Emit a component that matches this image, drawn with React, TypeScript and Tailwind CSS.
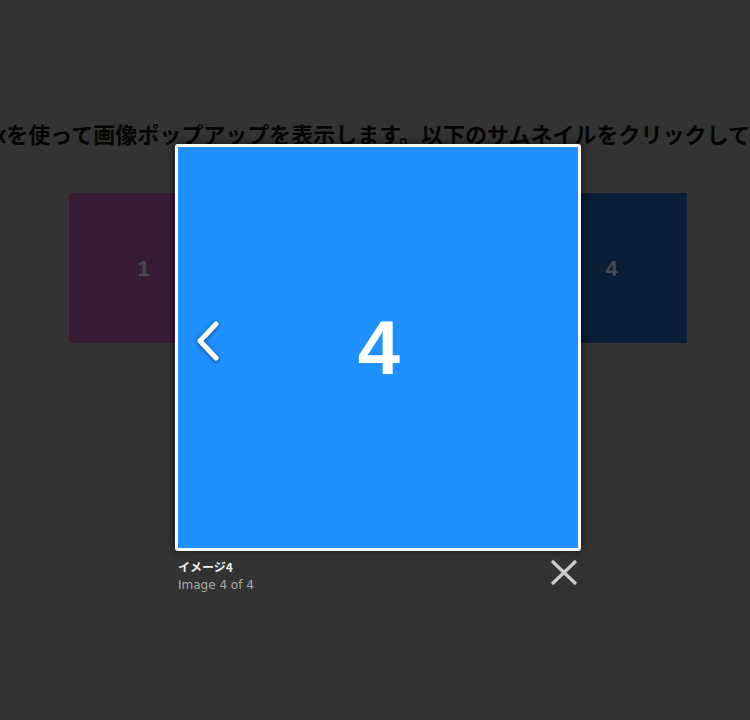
const thumbs = [
  { n: 1, bg: "bg-[#361a36]" },
  { n: 2, bg: "bg-[#1a3a26]" },
  { n: 3, bg: "bg-[#3a2a14]" },
  { n: 4, bg: "bg-[#0a1e38]" },
];

export default function App() {
  return (
    <div className="relative w-[750px] h-[720px] overflow-hidden bg-[#333333] font-['Liberation_Sans',sans-serif]">
      <div className="pt-[118px]">
        <div className="flex justify-center overflow-hidden">
          <h2 className="shrink-0 whitespace-nowrap pl-[20px] text-[22px] leading-[30px] font-bold text-[#050505] font-['Noto_Sans_CJK_JP','Noto_Sans_CJK_SC',sans-serif]">
            Lightboxを使って画像ポップアップを表示します。以下のサムネイルをクリックしてください。
          </h2>
        </div>

        <div className="mt-[45px] flex justify-center gap-[6px] pl-[5px]">
          {thumbs.map((t) => (
            <div
              key={t.n}
              className={`w-[150px] h-[150px] ${t.bg} flex items-center justify-center text-[22px] font-bold text-[#4a4a4a]`}
            >
              {t.n}
            </div>
          ))}
        </div>
      </div>

      {/* lightbox */}
      <div className="absolute left-[175px] top-[144px] w-[406px]">
        <div className="relative rounded-[3px] bg-white p-[3px] shadow-[0_0_8px_rgba(0,0,0,0.6)]">
          <div className="w-[400px] h-[401px] bg-[#1e90ff] flex items-center justify-center">
            <span className="text-[76px] font-bold text-white leading-none pl-[2px]">4</span>
          </div>
          <button className="absolute left-[18px] top-[175px] w-[30px] h-[44px] flex items-center justify-center">
            <svg width="28" height="42" viewBox="0 0 28 42" className="drop-shadow-[0_1px_2px_rgba(0,0,0,0.5)]">
              <path d="M22 4 L6 21 L22 38" fill="none" stroke="white" strokeWidth="5" strokeLinecap="round" strokeLinejoin="round" />
            </svg>
          </button>
        </div>
        <div className="flex items-start justify-between pl-[3px] pt-[7px] font-['DejaVu_Sans','Noto_Sans_CJK_JP',sans-serif]">
          <div className="leading-[18px]">
            <div className="text-[12px] font-bold text-[#f0f0f0] font-['Noto_Sans_CJK_JP',sans-serif]">イメージ4</div>
            <div className="text-[12px] text-[#a8a8a8]">Image 4 of 4</div>
          </div>
          <svg width="28" height="27" viewBox="0 0 28 27" className="mr-[3px] mt-[1px]">
            <path d="M2 2 L26 25 M26 2 L2 25" stroke="#cccccc" strokeWidth="3.2" strokeLinecap="butt" />
          </svg>
        </div>
      </div>
    </div>
  );
}
